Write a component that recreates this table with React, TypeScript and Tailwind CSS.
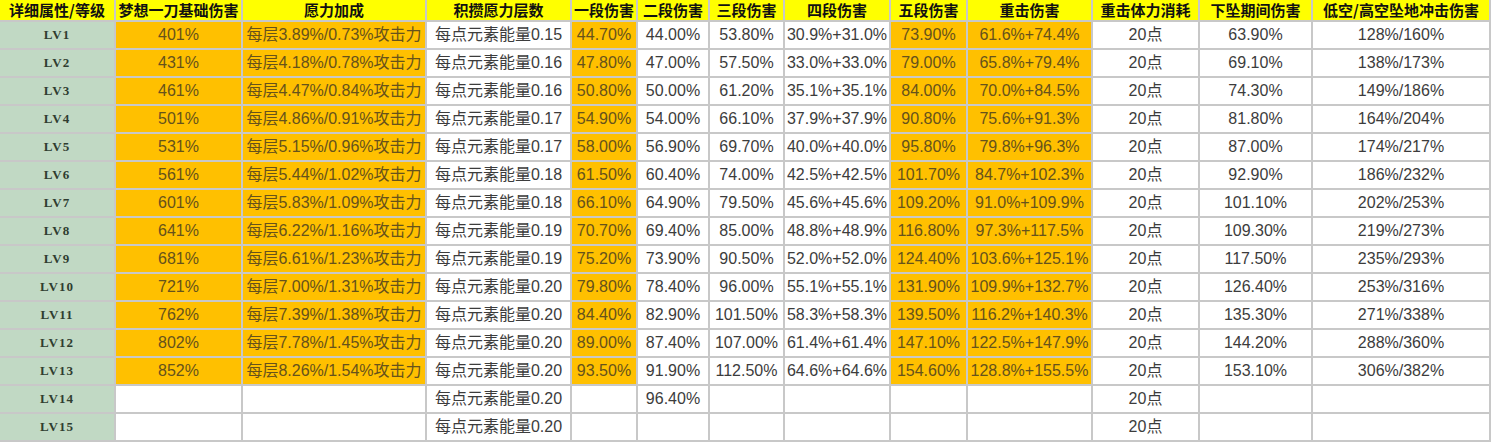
import React from 'react';

const headers = [
  '详细属性/等级',
  '梦想一刀基础伤害',
  '愿力加成',
  '积攒愿力层数',
  '一段伤害',
  '二段伤害',
  '三段伤害',
  '四段伤害',
  '五段伤害',
  '重击伤害',
  '重击体力消耗',
  '下坠期间伤害',
  '低空/高空坠地冲击伤害',
];

// columns painted orange for filled levels
const orangeCols = [1, 2, 4, 8, 9];

const rows: string[][] = [
  ['LV1', '401%', '每层3.89%/0.73%攻击力', '每点元素能量0.15', '44.70%', '44.00%', '53.80%', '30.9%+31.0%', '73.90%', '61.6%+74.4%', '20点', '63.90%', '128%/160%'],
  ['LV2', '431%', '每层4.18%/0.78%攻击力', '每点元素能量0.16', '47.80%', '47.00%', '57.50%', '33.0%+33.0%', '79.00%', '65.8%+79.4%', '20点', '69.10%', '138%/173%'],
  ['LV3', '461%', '每层4.47%/0.84%攻击力', '每点元素能量0.16', '50.80%', '50.00%', '61.20%', '35.1%+35.1%', '84.00%', '70.0%+84.5%', '20点', '74.30%', '149%/186%'],
  ['LV4', '501%', '每层4.86%/0.91%攻击力', '每点元素能量0.17', '54.90%', '54.00%', '66.10%', '37.9%+37.9%', '90.80%', '75.6%+91.3%', '20点', '81.80%', '164%/204%'],
  ['LV5', '531%', '每层5.15%/0.96%攻击力', '每点元素能量0.17', '58.00%', '56.90%', '69.70%', '40.0%+40.0%', '95.80%', '79.8%+96.3%', '20点', '87.00%', '174%/217%'],
  ['LV6', '561%', '每层5.44%/1.02%攻击力', '每点元素能量0.18', '61.50%', '60.40%', '74.00%', '42.5%+42.5%', '101.70%', '84.7%+102.3%', '20点', '92.90%', '186%/232%'],
  ['LV7', '601%', '每层5.83%/1.09%攻击力', '每点元素能量0.18', '66.10%', '64.90%', '79.50%', '45.6%+45.6%', '109.20%', '91.0%+109.9%', '20点', '101.10%', '202%/253%'],
  ['LV8', '641%', '每层6.22%/1.16%攻击力', '每点元素能量0.19', '70.70%', '69.40%', '85.00%', '48.8%+48.9%', '116.80%', '97.3%+117.5%', '20点', '109.30%', '219%/273%'],
  ['LV9', '681%', '每层6.61%/1.23%攻击力', '每点元素能量0.19', '75.20%', '73.90%', '90.50%', '52.0%+52.0%', '124.40%', '103.6%+125.1%', '20点', '117.50%', '235%/293%'],
  ['LV10', '721%', '每层7.00%/1.31%攻击力', '每点元素能量0.20', '79.80%', '78.40%', '96.00%', '55.1%+55.1%', '131.90%', '109.9%+132.7%', '20点', '126.40%', '253%/316%'],
  ['LV11', '762%', '每层7.39%/1.38%攻击力', '每点元素能量0.20', '84.40%', '82.90%', '101.50%', '58.3%+58.3%', '139.50%', '116.2%+140.3%', '20点', '135.30%', '271%/338%'],
  ['LV12', '802%', '每层7.78%/1.45%攻击力', '每点元素能量0.20', '89.00%', '87.40%', '107.00%', '61.4%+61.4%', '147.10%', '122.5%+147.9%', '20点', '144.20%', '288%/360%'],
  ['LV13', '852%', '每层8.26%/1.54%攻击力', '每点元素能量0.20', '93.50%', '91.90%', '112.50%', '64.6%+64.6%', '154.60%', '128.8%+155.5%', '20点', '153.10%', '306%/382%'],
  ['LV14', '', '', '每点元素能量0.20', '', '96.40%', '', '', '', '', '20点', '', ''],
  ['LV15', '', '', '每点元素能量0.20', '', '', '', '', '', '', '20点', '', ''],
];

export default function App() {
  return (
    <div className="bg-white w-[1493px] h-[443px] overflow-hidden font-['Liberation_Sans','Noto_Sans_CJK_SC',sans-serif]">
      <div className="grid grid-cols-[116px_127px_184px_145px_66px_72px_75px_106px_77px_125px_107px_113px_178px] w-[1491px]">
        {headers.map((h) => (
          <div
            key={h}
            className="h-[22px] flex items-center justify-center bg-[#ffff00] border-r-2 border-b-2 border-[#c8c8c8] text-[15px] font-bold text-[#111] whitespace-nowrap overflow-hidden font-['Noto_Sans_CJK_SC',sans-serif]"
          >
            {h}
          </div>
        ))}
        {rows.map((row) =>
          row.map((cell, i) => {
            const filled = row[1] !== '';
            if (i === 0) {
              return (
                <div
                  key={row[0] + i}
                  className="h-[28px] flex items-center justify-center bg-[#c1d9c4] border-r-2 border-b-2 border-[#c8c8c8] text-[13px] font-bold tracking-[1px] text-[#2f3d30] font-['Liberation_Serif',serif]"
                >
                  {cell}
                </div>
              );
            }
            const orange = filled && orangeCols.includes(i);
            return (
              <div
                key={row[0] + i}
                className={
                  orange
                    ? 'h-[28px] flex items-center justify-center bg-[#ffc000] border-r-2 border-b-2 border-[#c8c8c8] text-[16px] text-[#66521c] whitespace-nowrap overflow-hidden'
                    : 'h-[28px] flex items-center justify-center bg-white border-r-2 border-b-2 border-[#c8c8c8] text-[16px] text-[#3c3c3c] whitespace-nowrap overflow-hidden'
                }
              >
                {cell}
              </div>
            );
          })
        )}
      </div>
    </div>
  );
}
